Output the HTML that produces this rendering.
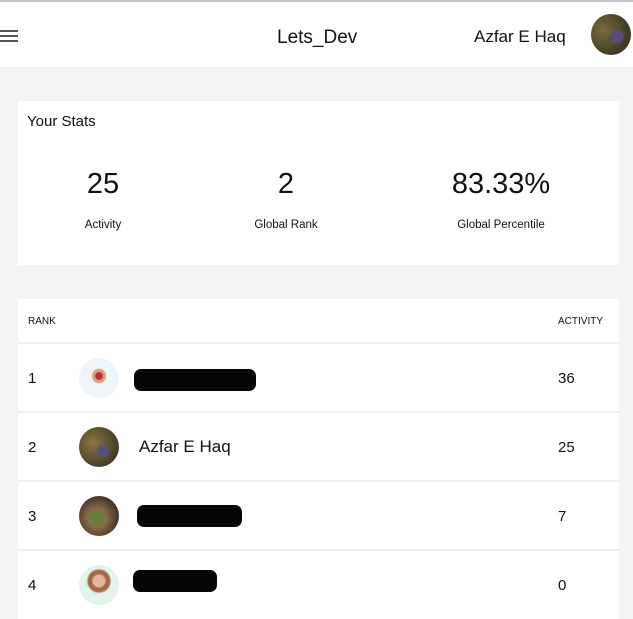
<!DOCTYPE html>
<html><head><style>
*{margin:0;padding:0;box-sizing:border-box}
body{width:633px;height:609px;overflow:hidden;background:#f4f4f4;font-family:"Liberation Sans",sans-serif;color:#111;position:relative}
.hdr{position:absolute;left:0;top:0;width:633px;height:67px;background:#fff;border-top:2px solid #c4c4c4}
.abs{position:absolute}
.ham{position:absolute;left:0;width:18px;height:2px;background:#555}
.card{position:absolute;left:18px;width:601px;background:#fff}
.av{position:absolute;width:40px;height:40px;border-radius:50%}
.row{position:absolute;left:0;width:601px;height:69px;border-top:2px solid #f0f0f0}
.rk{position:absolute;left:10px;top:26px;font-size:15px}
.act{position:absolute;left:540px;top:26px;font-size:15px}
.nm{position:absolute;left:121px;top:24px;font-size:17px}
.blk{position:absolute;background:#050505;border-radius:7px;height:22px}
</style></head><body>
<div class="hdr">
<div class="ham" style="top:28px"></div><div class="ham" style="top:33px"></div><div class="ham" style="top:38px"></div>
<div class="abs" style="left:277px;top:25px;font-size:19px">Lets_Dev</div>
<div class="abs" style="left:474px;top:25px;font-size:17px">Azfar E Haq</div>
<div class="abs" style="left:591px;top:12px;width:40px;height:41px;border-radius:50%;background:radial-gradient(circle at 65% 55%,#5b4a7a 0 18%,transparent 22%),radial-gradient(circle at 30% 40%,#7a6a3a,#3d3a22 70%)"></div>
</div>
<div class="card" style="top:101px;height:164px">
<div class="abs" style="left:9px;top:12px;font-size:15px">Your Stats</div>
<div class="abs" style="left:35px;width:100px;top:67px;text-align:center;font-size:29px">25</div>
<div class="abs" style="left:35px;width:100px;top:118px;text-align:center;font-size:11.5px">Activity</div>
<div class="abs" style="left:218px;width:100px;top:67px;text-align:center;font-size:29px">2</div>
<div class="abs" style="left:218px;width:100px;top:118px;text-align:center;font-size:11.5px">Global Rank</div>
<div class="abs" style="left:413px;width:140px;top:67px;text-align:center;font-size:29px">83.33%</div>
<div class="abs" style="left:413px;width:140px;top:118px;text-align:center;font-size:11.5px">Global Percentile</div>
</div>
<div class="card" style="top:299px;height:320px">
<div class="abs" style="left:10px;top:17px;font-size:10px">RANK</div>
<div class="abs" style="left:540px;top:17px;font-size:10px">ACTIVITY</div>
<div class="row" style="top:43px"><div class="rk">1</div>
<div class="av" style="left:61px;top:14px;background:radial-gradient(circle at 50% 45%,#b33 0 12%,#d9a07a 14% 22%,#eef4f8 26%)"></div>
<div class="blk" style="left:116px;top:25px;width:122px"></div><div class="act">36</div></div>
<div class="row" style="top:112px"><div class="rk">2</div>
<div class="av" style="left:61px;top:14px;background:radial-gradient(circle at 60% 60%,#56507a 0 16%,transparent 20%),radial-gradient(circle at 35% 40%,#8a7442,#3f3a24 75%)"></div>
<div class="nm">Azfar E Haq</div><div class="act">25</div></div>
<div class="row" style="top:181px"><div class="rk">3</div>
<div class="av" style="left:61px;top:14px;background:radial-gradient(circle at 45% 55%,#6a7a3a 0 20%,#8a6a4a 30%,#3a2e24 75%)"></div>
<div class="blk" style="left:119px;top:23px;width:105px"></div><div class="act">7</div></div>
<div class="row" style="top:250px"><div class="rk">4</div>
<div class="av" style="left:61px;top:14px;background:radial-gradient(circle at 50% 40%,#e5b69a 0 18%,#a06a4a 24% 34%,#e3f2ea 40%)"></div>
<div class="blk" style="left:115px;top:19px;width:84px"></div><div class="act">0</div></div>
</div>
</body></html>
